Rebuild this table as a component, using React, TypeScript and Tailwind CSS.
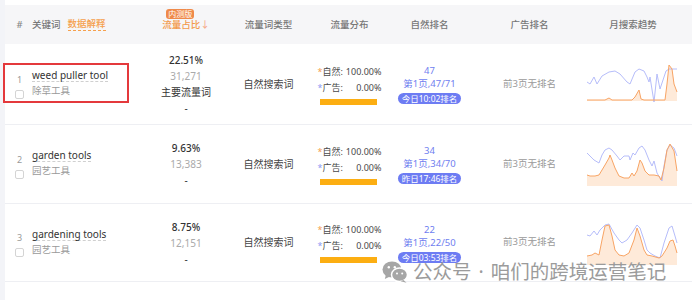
import type { JSX } from 'react';

const COLS = 'grid grid-cols-[135px_92px_73px_89px_71px_129px_78px]';

const App = () => {
    return (
        <div className="relative w-[692px] h-[300px] overflow-hidden bg-white flex font-['Noto_Sans','Noto_Sans_CJK_SC',sans-serif]">
            <div className="w-[5px] shrink-0 bg-[#f3f4f8]" />
            <div className="flex-1 pt-[5px]">
                <TableHeader />
                {keywordRows.map((row, index) => (
                    <KeywordRow key={index} row={row} index={index} />
                ))}
            </div>
            <Watermark />
        </div>
    )
};

const TableHeader = () => {
    return (
        <div className={`${COLS} h-[39px] items-center bg-[#f6f6f8] text-[9.5px] leading-[12px] font-medium text-[#777]`}>
            <div className="flex items-center pl-[10px] gap-[8px]">
                <span className="w-[9px] text-center text-[#888]">#</span>
                <span>关键词</span>
                <span className="-ml-[1px] text-[#f5a04e] border-b border-dashed border-[#f5a04e]">数据解释</span>
            </div>
            <div className="flex justify-center">
                <span className="relative text-[#f39a4c]">
                    流量占比<span className="text-[#f5ab8c]">↓</span>
                    <span className="absolute left-[4px] -top-[10px] h-[10px] px-[2px] rounded-[3px] bg-[#ef8a4a] text-white text-[8px] leading-[10px] font-normal">
                        内测版
                    </span>
                </span>
            </div>
            <div className="text-center">流量词类型</div>
            <div className="text-center">流量分布</div>
            <div className="text-center">自然排名</div>
            <div className="text-center">广告排名</div>
            <div className="text-center">月搜索趋势</div>
        </div>
    )
};

type Row = {
    height: string;
    keyword: string;
    cn: string;
    share: string;
    volume: string;
    main?: boolean;
    rank: string;
    page: string;
    when: string;
    chart: { blue: string; orange: string; bottom: number; dy: number };
    highlight?: boolean;
};

const KeywordRow = ({ row, index }: { row: Row; index: number }): JSX.Element => {
    return (
        <div className={`relative ${COLS} ${row.height} items-center border-b border-[#eeeff3]`}>
            {row.highlight && (
                <div className="absolute -left-[2px] top-[19px] w-[126px] h-[40px] border-2 border-[#e4393c]" />
            )}

            <div className="flex items-center pl-[10px] gap-[8px]">
                <div className="w-[9px] pt-[4px] flex flex-col items-center">
                    <span className="text-[9px] leading-[12px] text-[#999]">{index + 1}</span>
                    <span className="mt-[4px] w-[9px] h-[9px] border border-[#d4d4d4] rounded-[2px] bg-white" />
                </div>
                <div className="flex flex-col items-start">
                    <span className="text-[10px] leading-[12px] text-[#333] border-b border-dashed border-[#d0d0d0]">
                        {row.keyword}
                    </span>
                    <span className="mt-[1px] text-[9.5px] leading-[16px] text-[#9a9a9a]">{row.cn}</span>
                </div>
            </div>

            <div className="flex flex-col items-center text-[10px] leading-[16px] text-[#333]">
                <span className="font-medium">{row.share}</span>
                <span className="text-[#aaaaaa]">{row.volume}</span>
                {row.main && <span>主要流量词</span>}
                <span>-</span>
            </div>

            <div className="text-center text-[10px] text-[#444]">自然搜索词</div>

            <div className="flex justify-center">
                <div className="w-[64px] text-[9px] leading-[16px] text-[#4a4a4a] whitespace-nowrap">
                    <div className="flex justify-between">
                        <span><span className="text-[#f5a04e]">*</span>自然:</span>
                        <span>100.00%</span>
                    </div>
                    <div className="flex justify-between">
                        <span><span className="text-[#8f9af2]">*</span>广告:</span>
                        <span>0.00%</span>
                    </div>
                    <div className="mt-[3px] ml-[2px] w-[57px] h-[6px] bg-[#fcae12]" />
                </div>
            </div>

            <div className="flex flex-col items-center text-[9.5px] leading-[13px] text-[#6f7ef0]">
                <span>{row.rank}</span>
                <span>{row.page}</span>
                <span className="mt-[3px] h-[11px] px-[4px] rounded-full bg-[#6d7cf3] text-white text-[8.5px] leading-[11px] whitespace-nowrap">
                    {row.when}
                </span>
            </div>

            <div className="text-center text-[9.5px] text-[#9a9a9a]">前3页无排名</div>

            <div className="flex justify-center">
                <TrendChart {...row.chart} />
            </div>
        </div>
    )
};

const TrendChart = ({ blue, orange, bottom, dy }: { blue: string; orange: string; bottom: number; dy: number }) => {
    const pts = orange.trim().split(/\s+/);
    const first = pts[0].split(',')[0];
    const last = pts[pts.length - 1].split(',')[0];
    const area = `${orange} ${last},${bottom} ${first},${bottom}`;
    return (
        <svg width="92" height="44" viewBox="0 0 92 44" className="shrink-0">
            <g transform={`translate(0 ${dy})`}>
                <polygon points={area} fill="#fde3cc" fillOpacity="0.75" />
                <polyline points={blue} fill="none" stroke="#b6bdfa" strokeWidth="1" strokeLinejoin="round" />
                <polyline points={orange} fill="none" stroke="#f8a464" strokeWidth="1" strokeLinejoin="round" />
            </g>
        </svg>
    )
};

const Watermark = () => {
    return (
        <div className="absolute left-[382px] top-[261px] flex items-center gap-[5px] pointer-events-none">
            <svg width="26" height="22" viewBox="0 0 26 22">
                <ellipse cx="10" cy="8.5" rx="9.5" ry="8" fill="#a6a6a6" />
                <path d="M4 13.5 L2.8 18 L8.5 15.2 Z" fill="#a6a6a6" />
                <ellipse cx="17.5" cy="13.8" rx="8" ry="6.8" fill="#a6a6a6" stroke="#ffffff" strokeWidth="1.5" />
                <path d="M21.5 19 L24.5 21.8 L18.5 20.2 Z" fill="#a6a6a6" />
                <circle cx="6.8" cy="6.3" r="1.2" fill="#ffffff" />
                <circle cx="12.8" cy="6.3" r="1.2" fill="#ffffff" />
                <circle cx="15" cy="12.6" r="1" fill="#ffffff" />
                <circle cx="20.2" cy="12.6" r="1" fill="#ffffff" />
            </svg>
            <span className="flex text-[19.5px] leading-[22px] text-[#9b9b9b] whitespace-nowrap">
                <span>公众号</span>
                <span className="px-[7px]">·</span>
                <span>咱们的跨境运营笔记</span>
            </span>
        </div>
    )
};

const keywordRows: Row[] = [
    {
        height: 'h-[81px]',
        keyword: 'weed puller tool',
        cn: '除草工具',
        share: '22.51%',
        volume: '31,271',
        main: true,
        rank: '47',
        page: '第1页,47/71',
        when: '今日10:02排名',
        highlight: true,
        chart: {
            blue: '0,20 3,22 7,15 10,22 15,14 22,10 28,9 33,12 40,20 43,22 48,10 52,7 57,9 60,15 62,20 63,15 67,40 70,12 73,27 77,15 79,9 82,7 90,7',
            orange: '0,38 18,38 22,36 25,38 45,38 48,35 52,28 54,37 57,38 78,38 80,22 82,3 85,7 87,22 90,30',
            bottom: 39,
            dy: 0,
        },
    },
    {
        height: 'h-[79px]',
        keyword: 'garden tools',
        cn: '园艺工具',
        share: '9.63%',
        volume: '13,383',
        rank: '34',
        page: '第1页,34/70',
        when: '昨日17:46排名',
        chart: {
            blue: '0,10 3,13 7,17 12,20 15,12 18,7 22,5 25,7 30,13 33,17 37,13 42,13 43,17 46,10 48,12 52,5 55,3 58,7 62,17 65,23 67,18 70,30 73,35 75,38 77,23 80,7 83,2 87,5 90,13',
            orange: '0,32 3,33 8,33 12,32 18,22 22,15 23,12 25,17 28,25 32,33 37,35 42,35 45,30 47,33 50,28 53,17 55,20 58,28 62,32 67,32 72,33 74,37 77,25 80,7 83,1 87,8 90,28',
            bottom: 43,
            dy: 1,
        },
    },
    {
        height: 'h-[78px]',
        keyword: 'gardening tools',
        cn: '园艺工具',
        share: '8.75%',
        volume: '12,151',
        rank: '22',
        page: '第1页,22/50',
        when: '今日03:53排名',
        chart: {
            blue: '0,12 3,13 7,8 10,12 13,7 18,2 22,1 27,10 32,17 35,20 40,17 45,10 50,2 53,5 57,17 60,27 63,30 68,33 73,35 77,20 82,5 85,3 88,13 90,20',
            orange: '0,33 5,32 8,30 12,32 15,17 18,3 22,2 25,13 28,27 32,32 37,33 42,30 47,17 50,5 53,13 57,27 60,32 65,33 72,35 75,33 80,25 83,18 86,17 88,23 90,30',
            bottom: 42,
            dy: 2,
        },
    },
];

export default App
